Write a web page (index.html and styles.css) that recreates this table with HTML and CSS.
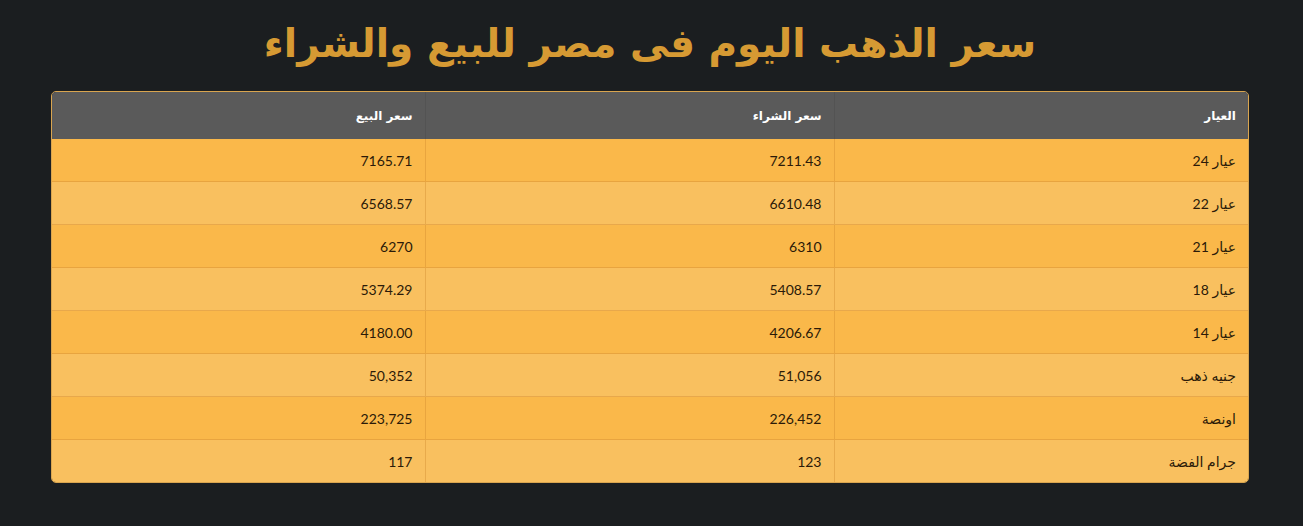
FILE: index.html
```html
<!DOCTYPE html>
<html lang="ar" dir="rtl">
<head>
<meta charset="utf-8">
<link rel="stylesheet" href="styles.css">
</head>
<body>
<main class="page">
  <h1 class="title">سعر الذهب اليوم فى مصر للبيع والشراء</h1>
  <div class="table-wrap">
    <table class="prices">
      <colgroup><col class="c1"><col class="c2"><col class="c3"></colgroup>
      <thead>
        <tr><th>العيار</th><th>سعر الشراء</th><th>سعر البيع</th></tr>
      </thead>
      <tbody>
        <tr><td>عيار 24</td><td>7211.43</td><td>7165.71</td></tr>
        <tr><td>عيار 22</td><td>6610.48</td><td>6568.57</td></tr>
        <tr><td>عيار 21</td><td>6310</td><td>6270</td></tr>
        <tr><td>عيار 18</td><td>5408.57</td><td>5374.29</td></tr>
        <tr><td>عيار 14</td><td>4206.67</td><td>4180.00</td></tr>
        <tr><td>جنيه ذهب</td><td>51,056</td><td>50,352</td></tr>
        <tr><td>اونصة</td><td>226,452</td><td>223,725</td></tr>
        <tr><td>جرام الفضة</td><td>123</td><td>117</td></tr>
      </tbody>
    </table>
  </div>
</main>
</body>
</html>
```
FILE: styles.css
```css
html, body {
  margin: 0;
  padding: 0;
  background: #1b1e20;
}
body {
  font-family: "Lato", "DejaVu Sans", sans-serif;
}
.page {
  padding: 14px 54px 0 51px;
}
.title {
  margin: 0 0 17px;
  text-align: center;
  color: #d69a33;
  font-family: "DejaVu Sans", sans-serif;
  font-weight: bold;
  font-size: 39px;
  line-height: 60px;
}
.table-wrap {
  box-sizing: border-box;
  border: 1px solid #d9a54f;
  border-radius: 5px;
  overflow: hidden;
}
.prices {
  width: 100%;
  border-collapse: collapse;
  table-layout: fixed;
}
.c1 { width: 414px; }
.c2 { width: 409px; }
.prices th, .prices td {
  text-align: right;
  padding: 0 12px;
  border-left: 1px solid rgba(200, 130, 40, 0.35);
}
.prices th:last-child, .prices td:last-child { border-left: none; }
.prices th {
  height: 47px;
  background: #5a5a5a;
  color: #ffffff;
  font-family: "DejaVu Sans", sans-serif;
  font-size: 12px;
  font-weight: bold;
  border-left-color: #535353;
}
.prices td {
  height: 42px;
  font-size: 14px;
  color: #2b1a08;
  border-top: 1px solid rgba(210, 140, 50, 0.45);
}
.prices tbody tr:nth-child(odd) td { background: #fab84a; }
.prices tbody tr:nth-child(even) td { background: #f9c05f; }
.prices tbody tr:first-child td { border-top: none; }
```
